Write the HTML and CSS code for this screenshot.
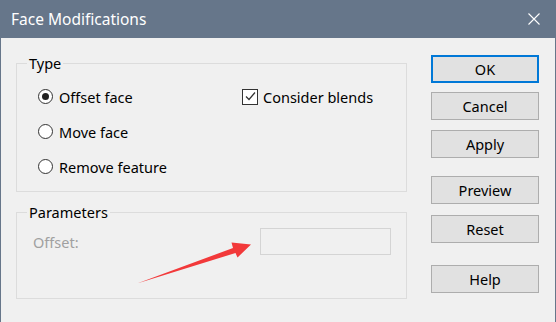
FILE: index.html
```html
<!DOCTYPE html>
<html lang="en">
<head>
    <meta charset="UTF-8">
    <meta name="viewport" content="width=device-width, initial-scale=1.0">
    <title>Face Modifications</title>
    <link rel="stylesheet" href="styles.css">
</head>
<body>
    <div class="window">
        <div class="titlebar">
            <span class="title">Face Modifications</span>
            <svg class="close-icon" width="12" height="12" viewBox="0 0 12 12">
                <path d="M0.5 0.5 L11.5 11.5 M11.5 0.5 L0.5 11.5" stroke="#fff" stroke-width="1.1" fill="none"/>
            </svg>
        </div>

        <div class="content">
            <div class="groups">
                <fieldset class="group type-group">
                    <legend>Type</legend>
                    <div class="row">
                        <label class="option first"><span class="radio checked"></span>Offset face</label>
                        <label class="option"><span class="checkbox">
                            <svg width="13" height="13" viewBox="0 0 13 13"><path d="M2 6.5 L5 9.5 L11 2.5" stroke="#333" stroke-width="1.2" fill="none"/></svg>
                        </span>Consider blends</label>
                    </div>
                    <div class="row">
                        <label class="option first"><span class="radio"></span>Move face</label>
                    </div>
                    <div class="row">
                        <label class="option first"><span class="radio"></span>Remove feature</label>
                    </div>
                </fieldset>

                <fieldset class="group params-group">
                    <legend>Parameters</legend>
                    <div class="param-row">
                        <span class="param-label">Offset:</span>
                        <span class="field"></span>
                    </div>
                </fieldset>
            </div>

            <div class="buttons">
                <button class="btn default">OK</button>
                <button class="btn cancel">Cancel</button>
                <button class="btn apply">Apply</button>
                <button class="btn preview">Preview</button>
                <button class="btn reset">Reset</button>
                <button class="btn help">Help</button>
            </div>
        </div>

        <!-- annotation arrow drawn over the dialog -->
        <svg class="arrow" width="556" height="322" viewBox="0 0 556 322">
            <polygon points="137,283.5 233,248 231.5,242.5 251,244.5 237.5,257.5 235.5,253" fill="#f2393a"/>
        </svg>
    </div>
</body>
</html>
```

FILE: styles.css
```css
html, body {
    margin: 0;
    padding: 0;
}

body {
    width: 556px;
    height: 322px;
    overflow: hidden;
}

.window {
    position: relative;
    width: 556px;
    height: 322px;
    box-sizing: border-box;
    border-left: 1px solid #66768a;
    border-right: 1px solid #66768a;
    background-color: #f0f0f0;
    display: flex;
    flex-direction: column;
    font-family: "Noto Sans", "Open Sans", sans-serif;
    font-size: 14.5px;
    color: #000;
}

.titlebar {
    height: 38px;
    flex-shrink: 0;
    background-color: #66768a;
    color: #fff;
    display: flex;
    align-items: center;
    justify-content: space-between;
    padding: 0 15px 0 10px;
}

.title {
    font-size: 15.5px;
    line-height: 20px;
}

.content {
    flex: 1;
    display: flex;
    padding: 0 16px 0 15px;
}

.groups {
    width: 391px;
}

.group {
    margin: 0;
    padding: 0;
    min-width: 0;
    border: 1px solid #dcdcdc;
}

.group legend {
    margin-left: 10px;
    padding: 0 2px;
    line-height: 18px;
}

.type-group {
    margin-top: 16px;
    padding: 7px 0 7px 0;
}

.row {
    display: flex;
    align-items: center;
    height: 35px;
    padding-left: 21px;
}

.option {
    display: flex;
    align-items: center;
    line-height: 20px;
}

.option.first {
    width: 204px;
}

.radio {
    width: 13px;
    height: 13px;
    border: 1px solid #333;
    border-radius: 50%;
    background-color: #fff;
    margin-right: 6px;
    display: flex;
    align-items: center;
    justify-content: center;
}

.radio.checked::after {
    content: "";
    width: 7px;
    height: 7px;
    border-radius: 50%;
    background-color: #222;
}

.checkbox {
    width: 14px;
    height: 14px;
    border: 1px solid #333;
    background-color: #fff;
    margin-right: 5px;
    display: flex;
    align-items: center;
    justify-content: center;
}

.params-group {
    margin-top: 11px;
    padding: 7px 0 43px 0;
}

.param-row {
    display: flex;
    align-items: center;
    padding-left: 16px;
}

.param-label {
    width: 227px;
    color: #a0a0a0;
}

.field {
    width: 129px;
    height: 25px;
    border: 1px solid #d4d4d4;
    background-color: #f0f0f0;
}

.buttons {
    margin-left: 24px;
    width: 108px;
    display: flex;
    flex-direction: column;
    padding-top: 17px;
}

.btn {
    height: 28px;
    box-sizing: border-box;
    border: 1px solid #adadad;
    background-color: #e1e1e1;
    font-family: inherit;
    font-size: 14.5px;
    color: #000;
    padding: 0;
}

.btn.default {
    border: 2px solid #0078d7;
}

.btn.cancel { margin-top: 9px; }
.btn.apply { margin-top: 10px; }
.btn.preview { margin-top: 18px; }
.btn.reset { margin-top: 11px; }
.btn.help { margin-top: 22px; }

.arrow {
    position: absolute;
    top: 0;
    left: -1px;
    pointer-events: none;
}
```
